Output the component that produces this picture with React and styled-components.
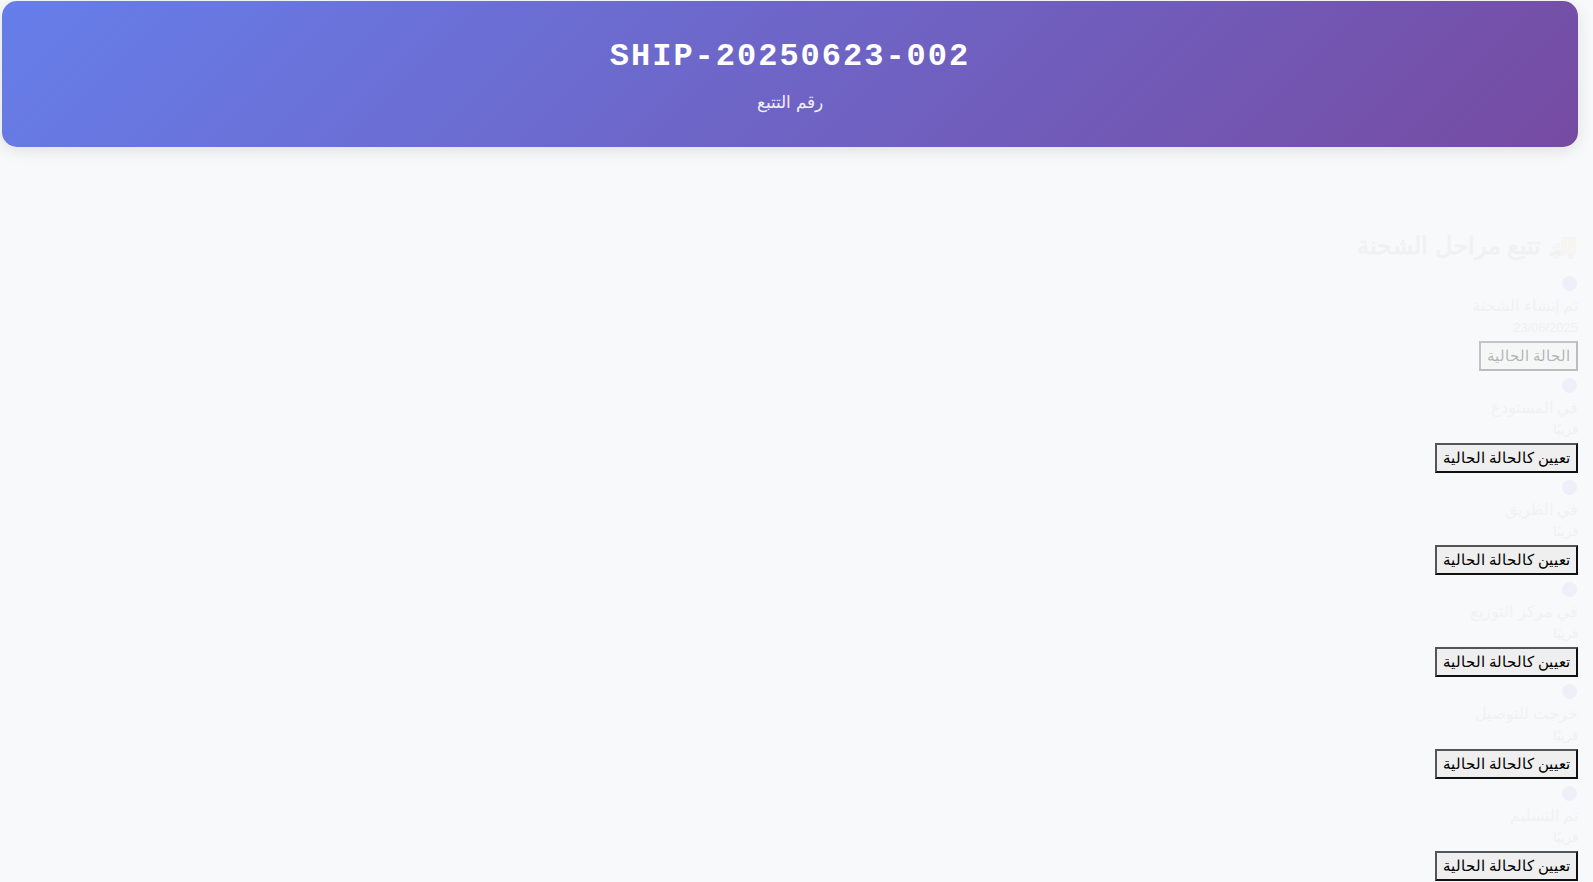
import styled, { createGlobalStyle } from "styled-components";

const GlobalStyle = createGlobalStyle`
  body {
    margin: 0;
    background: #f8f9fa;
    direction: rtl;
    font-family: "Segoe UI", Tahoma, Geneva, Verdana, sans-serif;
  }
`;

const Page = styled.div`
  padding: 1px 15px 0 2px;
`;

const Header = styled.header`
  background: linear-gradient(135deg, #667eea 0%, #764ba2 100%);
  color: #fff;
  border-radius: 15px;
  box-shadow: 0 4px 15px rgba(0, 0, 0, 0.1);
  text-align: center;
  padding: 38px 20px 32px;
`;

const TrackingNumber = styled.div`
  font-family: "Liberation Mono", "Courier New", monospace;
  font-weight: bold;
  font-size: 32px;
  letter-spacing: 2px;
  line-height: 36px;
  direction: ltr;
`;

const TrackingLabel = styled.div`
  margin-top: 16px;
  font-size: 17px;
  line-height: 24px;
  opacity: 0.9;
`;

const Timeline = styled.section`
  padding-top: 84px;
`;

const Heading = styled.h2`
  margin: 0 0 11px;
  font-size: 24px;
  line-height: 30px;
  font-weight: bold;
  color: #2c3e50;
  opacity: 0.035;
`;

const Stage = styled.div`
  display: flex;
  flex-direction: column;
  align-items: flex-start;
  margin-bottom: 3px;
`;

const StageIcon = styled.div`
  width: 15px;
  height: 15px;
  margin: 4px 1px 3px;
  border-radius: 50%;
  background: #667eea;
  opacity: 0.07;
`;

const StageTitle = styled.div`
  font-size: 16px;
  line-height: 24px;
  color: #2c3e50;
  opacity: 0.035;
`;

const StageDate = styled.div`
  font-size: 13px;
  line-height: 20px;
  color: #6c757d;
  opacity: 0.06;
`;

const StatusButton = styled.button`
  appearance: none;
  margin-top: 3px;
  height: 30px;
  padding: 0 6px;
  font-family: sans-serif;
  font-size: 15.3px;
  color: #000;
  background: #efefef;
  border: 2px solid;
  border-color: #555 #111 #111 #555;
  border-radius: 0;

  &:disabled {
    color: rgba(16, 16, 16, 0.3);
    background: rgba(239, 239, 239, 0.3);
    border-color: #c4c4c4 #bdbdbd #bdbdbd #c4c4c4;
  }
`;

const stages = [
  { title: "تم إنشاء الشحنة", date: "23/06/2025", current: true },
  { title: "في المستودع", date: "قريبًا" },
  { title: "في الطريق", date: "قريبًا" },
  { title: "في مركز التوزيع", date: "قريبًا" },
  { title: "خرجت للتوصيل", date: "قريبًا" },
  { title: "تم التسليم", date: "قريبًا" },
];

export default function App() {
  return (
    <>
      <GlobalStyle />
      <Page>
        <Header>
          <TrackingNumber>SHIP-20250623-002</TrackingNumber>
          <TrackingLabel>رقم التتبع</TrackingLabel>
        </Header>
        <Timeline>
          <Heading>🚚 تتبع مراحل الشحنة</Heading>
          {stages.map((s) => (
            <Stage key={s.title}>
              <StageIcon />
              <StageTitle>{s.title}</StageTitle>
              <StageDate>{s.date}</StageDate>
              <StatusButton disabled={s.current}>
                {s.current ? "الحالة الحالية" : "تعيين كالحالة الحالية"}
              </StatusButton>
            </Stage>
          ))}
        </Timeline>
      </Page>
    </>
  );
}
